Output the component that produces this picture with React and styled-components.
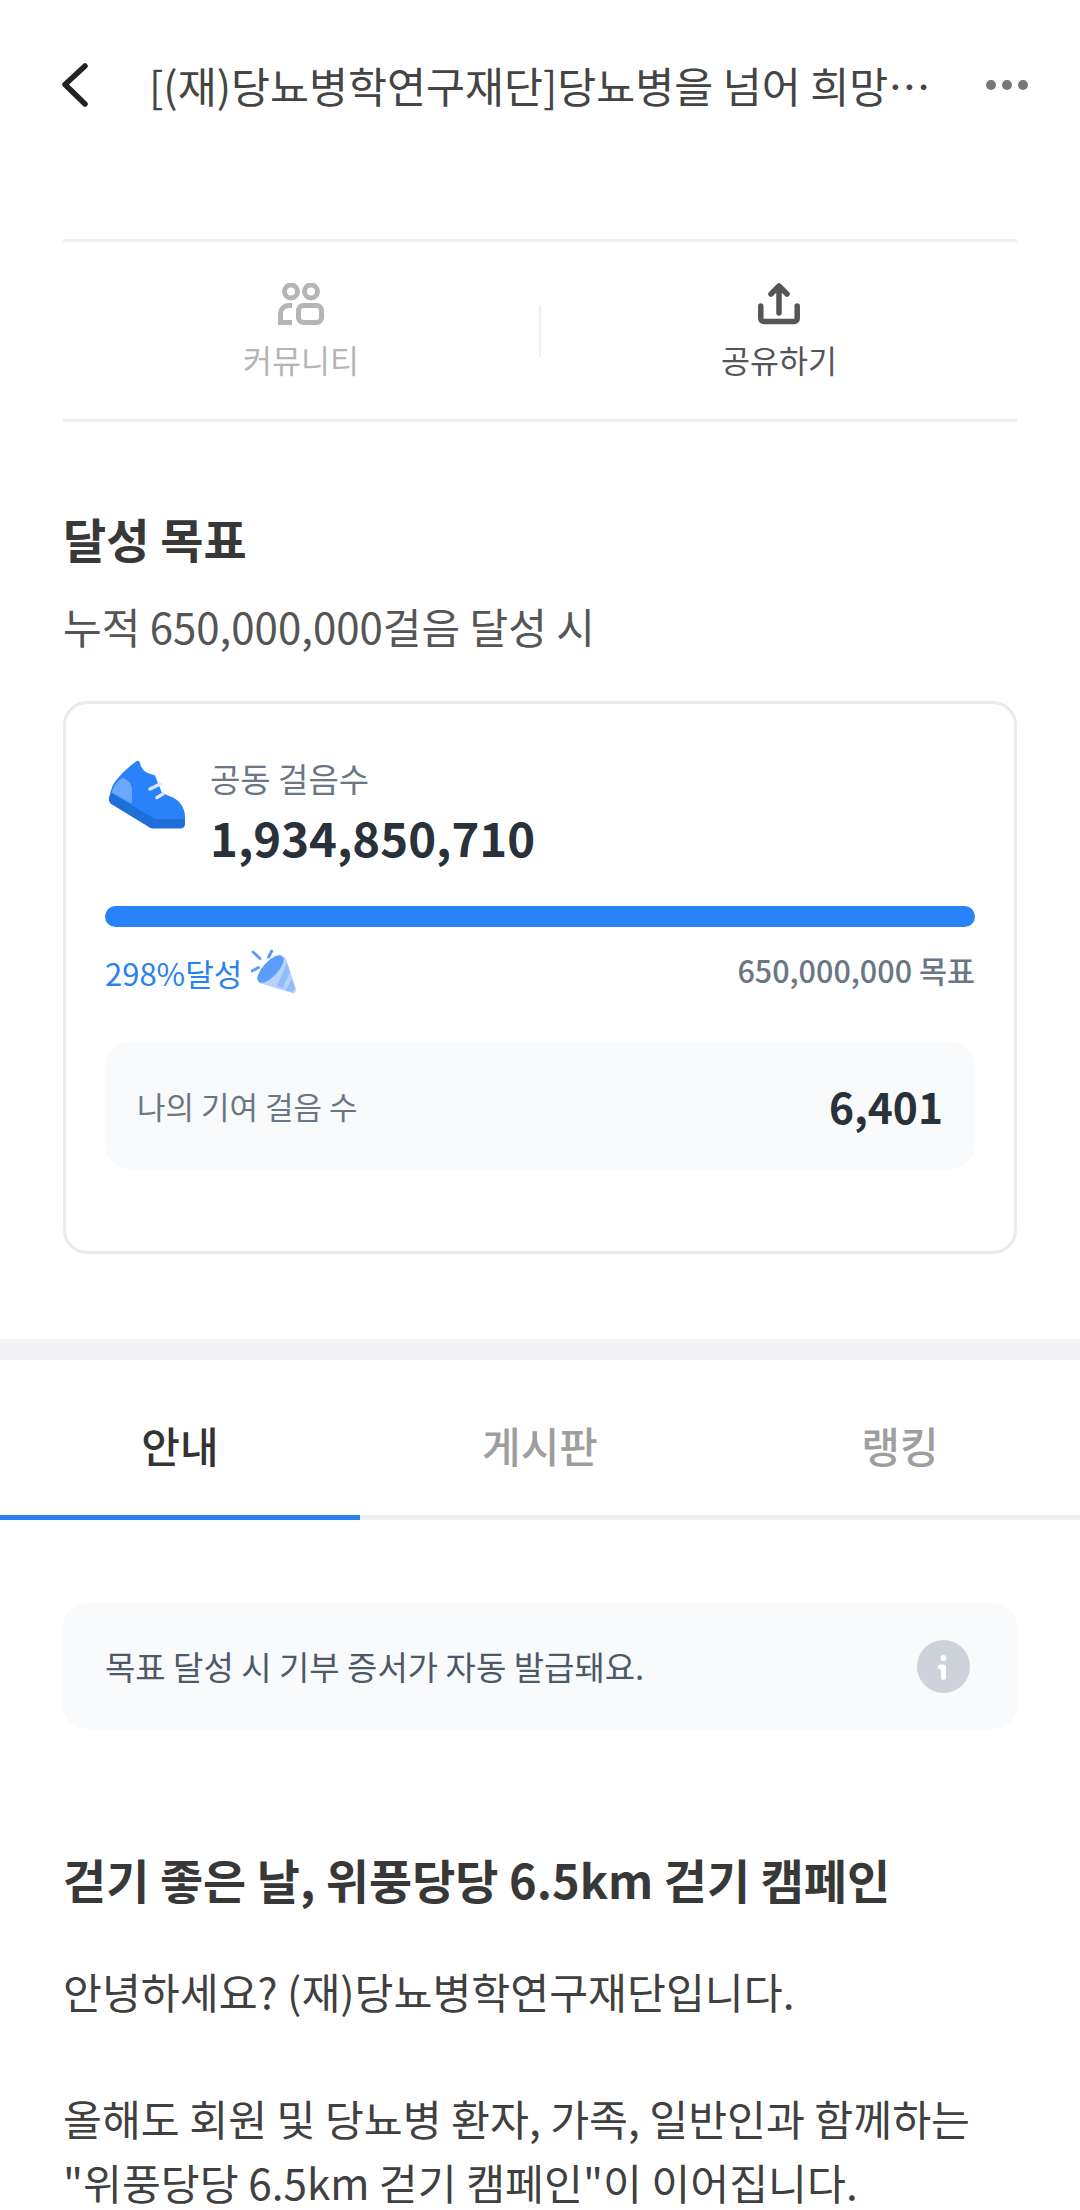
import React from "react";
import styled, { createGlobalStyle } from "styled-components";

const Global = createGlobalStyle`
  html, body { margin: 0; padding: 0; background: #fff; }
  body { width: 1080px; height: 2210px; overflow: hidden; font-family: "Noto Sans CJK KR", "Noto Sans", sans-serif; }
  * { box-sizing: border-box; }
`;
const Page = styled.div`width:1080px;height:2210px;overflow:hidden;background:#fff;color:#333;`;
const Header = styled.header`height:170px;margin-bottom:69px;padding:0 50px 0 60px;display:flex;align-items:center;`;
const Back = styled.svg`width:32px;height:48px;flex:none;`;
const Title = styled.h1`margin:0 0 0 57px;flex:1;font-size:42.4px;line-height:56px;font-weight:400;color:#444;white-space:nowrap;`;
const More = styled.svg`width:44px;height:12px;flex:none;margin-right:1px;`;
const Section = styled.section`padding:0 63px;`;
const Actions = styled.div`height:183px;border-top:3px solid #eeeff3;border-bottom:3px solid #eeeff3;display:flex;align-items:center;`;
const Action = styled.div`flex:1;display:flex;flex-direction:column;align-items:center;padding-top:2px;color:${p=>p.$muted?"#b5b5b5":"#555"};font-size:31.5px;line-height:44px;`;
const ActIcon = styled.svg`width:${p=>p.$w}px;height:42px;margin-bottom:12px;`;
const VLine = styled.div`width:2px;height:52px;background:#eeeff3;`;
const Goal = styled.h2`margin:84px 0 0;font-size:47px;line-height:64px;font-weight:700;color:#383838;`;
const Sub = styled.p`margin:28px 0 0;font-size:42px;line-height:56px;color:#555;`;
const Card = styled.div`margin-top:47px;height:553px;border:3px solid #e8eaee;border-radius:24px;padding:52px 39px 0;`;
const Top = styled.div`display:flex;gap:21px;align-items:flex-start;`;
const Shoe = styled.svg`width:84px;height:76px;flex:none;margin-top:1px;`;
const Labels = styled.div`display:flex;flex-direction:column;`;
const Lbl = styled.div`font-size:33px;line-height:44px;color:#6b7684;`;
const Total = styled.div`font-size:47.3px;line-height:66px;font-weight:700;color:#29313a;margin-top:4px;`;
const Bar = styled.div`margin-top:36px;height:21px;border-radius:11px;background:#2a82fb;`;
const Row = styled.div`margin-top:21px;display:flex;justify-content:space-between;align-items:center;height:50px;`;
const Pct = styled.div`display:flex;align-items:center;gap:9px;font-size:31px;color:#2a82f0;line-height:44px;`;
const Popper = styled.svg`width:48px;height:48px;margin-top:-3px;`;
const Target = styled.div`font-size:30.5px;line-height:44px;color:#6b7684;font-weight:500;margin-bottom:6px;`;
const Mine = styled.div`margin-top:44px;height:127px;border-radius:24px;background:#f9fafc;padding:0 32px;display:flex;justify-content:space-between;align-items:center;`;
const MineL = styled.div`font-size:31px;color:#6b7684;`;
const MineV = styled.div`font-size:42.5px;font-weight:700;color:#29313a;`;
const Gap = styled.div`margin-top:85px;height:21px;background:#f4f4f8;`;
const Tabs = styled.div`display:flex;height:160px;border-bottom:5px solid #eeeff3;`;
const Tab = styled.div`flex:1;margin-bottom:-5px;padding-top:14px;display:flex;align-items:center;justify-content:center;font-size:42px;font-weight:500;color:${p=>p.$on?"#333":"#9e9e9e"};border-bottom:5px solid ${p=>p.$on?"#2a82f0":"transparent"};`;
const Notice = styled.div`margin-top:83px;height:126px;border-radius:24px;background:#f9fafc;padding:0 47px 0 42px;display:flex;justify-content:space-between;align-items:center;font-size:33px;color:#4e5968;`;
const Info = styled.svg`width:53px;height:53px;`;
const Camp = styled.h3`margin:118px 0 0;font-size:46.9px;line-height:64px;font-weight:700;color:#383838;`;
const Body = styled.p`margin:48px 0 0;font-size:42.3px;line-height:63.5px;color:#404040;white-space:pre-line;`;

export default function App(){return <Page><Global/>
<Header>
<Back viewBox="0 0 32 48"><path d="M25 5 L5 23.5 L25 43" fill="none" stroke="#222" strokeWidth="5.5" strokeLinecap="round" strokeLinejoin="round"/></Back>
<Title>[(재)당뇨병학연구재단]당뇨병을 넘어 희망…</Title>
<More viewBox="0 0 44 12"><circle cx="6" cy="6" r="5" fill="#777"/><circle cx="22" cy="6" r="5" fill="#777"/><circle cx="38" cy="6" r="5" fill="#777"/></More>
</Header>
<Section>
<Actions>
<Action $muted><ActIcon $w={46} viewBox="0 0 46 42" fill="none" stroke="#b5b5b5" strokeWidth="5"><circle cx="13" cy="8.500" r="6.500"/><circle cx="33" cy="8.500" r="6.500"/><path d="M14 39.500H2.500V30.500a8 8 0 0 1 8-8H14"/><rect x="20.500" y="22.500" width="23" height="17" rx="5"/></ActIcon>커뮤니티</Action>
<VLine/>
<Action><ActIcon $w={42} viewBox="0 0 42 42" fill="none" stroke="#555" strokeWidth="5.500" strokeLinecap="round" strokeLinejoin="round"><path d="M21 30V4M13 11l8-8 8 8"/><path d="M2.800 23v12.500a3 3 0 0 0 3 3h30.400a3 3 0 0 0 3-3V23"/></ActIcon>공유하기</Action>
</Actions>
<Goal>달성 목표</Goal>
<Sub>누적 650,000,000걸음 달성 시</Sub>
<Card>
<Top>
<Shoe viewBox="0 0 84 76"><path d="M31 4.500 C33 3 34 3.500 35 6 C36 12 41 16 46 17 L50 18.500 L57 36 C60 37 62 38 64 39 C74 42 80 50 80 60 L80 64 L50 64 L5 38 C6 30 10 24 14 20 C19 14 25 9 31 4.500Z" fill="#2a82fb"/><path d="M6 36 L50 62 L80 62 L80 67 C80 70 78 71.500 75 71.500 L49 71.500 C46.500 71.500 45 71 43 69.500 L7 47.500 C3 45 3 41 6 36Z" fill="#1f6fd8"/><path d="M9 30 C11 26 14 23 17 21 C23 22 27 27 27 33 C27 38 27 43 26.500 46.500 L6.500 35.500Z" fill="#69a8fb"/><path d="M45 32l10-5M52 40.500l6-3.500" stroke="#d5e6fe" strokeWidth="3.500" strokeLinecap="round"/></Shoe>
<Labels><Lbl>공동 걸음수</Lbl><Total>1,934,850,710</Total></Labels>
</Top>
<Bar/>
<Row>
<Pct>298%달성<Popper viewBox="0 0 48 48"><path d="M8 35 L31 9 Q34 8 35 11 L45 41 Q45 46 41 45 Z" fill="#b5d3fd"/><path d="M26 38 L36 15 L39 24 L32 40Z" fill="#8fbdfc"/><path d="M35 42 L41 31 L44 40 L41 44Z" fill="#8fbdfc"/><ellipse cx="19.500" cy="21" rx="17.500" ry="7.500" transform="rotate(-47 19.500 21)" fill="#5c9dfb"/><path d="M2 4l7 6.500M20.700 3l-3 6M1 23l6.500-3.500" stroke="#5c9dfb" strokeWidth="3" strokeLinecap="round"/></Popper></Pct>
<Target>650,000,000 목표</Target>
</Row>
<Mine><MineL>나의 기여 걸음 수</MineL><MineV>6,401</MineV></Mine>
</Card>
</Section>
<Gap/>
<Tabs><Tab $on>안내</Tab><Tab>게시판</Tab><Tab>랭킹</Tab></Tabs>
<Section>
<Notice>목표 달성 시 기부 증서가 자동 발급돼요.<Info viewBox="0 0 53 53"><circle cx="26.500" cy="26.500" r="26.500" fill="#cdd3d9"/><circle cx="26.500" cy="18" r="3" fill="#fff"/><path d="M23.500 27h3v10.500" fill="none" stroke="#fff" strokeWidth="5" strokeLinecap="round" strokeLinejoin="round"/></Info></Notice>
<Camp>걷기 좋은 날, 위풍당당 6.5km 걷기 캠페인</Camp>
<Body>{"안녕하세요? (재)당뇨병학연구재단입니다.\n\n올해도 회원 및 당뇨병 환자, 가족, 일반인과 함께하는\n\"위풍당당 6.5km 걷기 캠페인\"이 이어집니다."}</Body>
</Section>
</Page>}
